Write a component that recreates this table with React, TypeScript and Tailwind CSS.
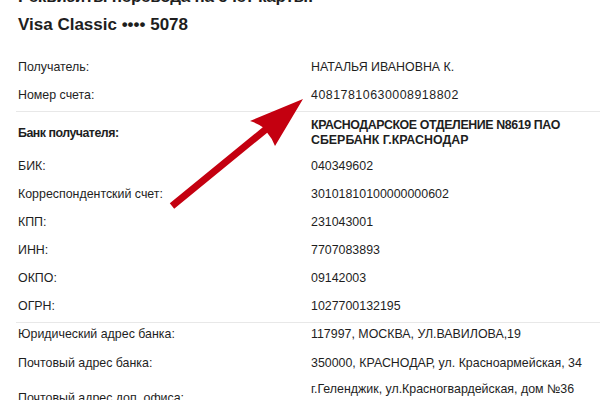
const ROWS_MID = [
  { label: "БИК:", value: "040349602" },
  { label: "Корреспондентский счет:", value: "30101810100000000602" },
  { label: "КПП:", value: "231043001" },
  { label: "ИНН:", value: "7707083893" },
  { label: "ОКПО:", value: "09142003" },
  { label: "ОГРН:", value: "1027700132195" },
];

function Row({
  label,
  value,
  className = "leading-[28px]",
  valueClass = "",
}: {
  label: string;
  value: string;
  className?: string;
  valueClass?: string;
}) {
  return (
    <div className={`flex ${className}`}>
      <div className="w-[293px] shrink-0">{label}</div>
      <div className={`flex-1 ${valueClass}`}>{value}</div>
    </div>
  );
}

function Divider() {
  return <div className="mt-[2px] h-px bg-[#e8e8e8] ml-[-2px]" />;
}

function Arrow() {
  return (
    <svg className="absolute left-0 top-0 pointer-events-none" width="600" height="400" viewBox="0 0 600 400">
      <path
        d="M303 99 L250 121 Q258 123.5 262.8 127.3 L169.8 203.3 L174.2 208.7 L267.2 132.7 Q272 138 275 146 Z"
        fill="#c40010"
      />
    </svg>
  );
}

export default function App() {
  return (
    <div className="relative w-[600px] h-[400px] overflow-hidden bg-white text-[#1e1e1e] font-['Liberation_Sans',Arial,sans-serif]">
      <div className="px-[18px] mt-[-17px] text-[17px] font-bold leading-[28px]">
        <div className="tracking-[-0.25px]">Реквизиты перевода на счет карты:</div>
        <div>Visa Classic •••• 5078</div>
      </div>

      <div className="mt-[14px] pl-[18px] text-[12.4px]">
        <Row label="Получатель:" value="НАТАЛЬЯ ИВАНОВНА К." />
        <Row label="Номер счета:" value="40817810630008918802" valueClass="tracking-[0.5px]" />
        <Divider />

        <div className="flex items-center pt-[6px] pb-[4px] leading-[15px] font-bold">
          <div className="w-[293px] shrink-0 tracking-[-0.5px]">Банк получателя:</div>
          <div className="flex-1">
            <div className="tracking-[-0.4px]">КРАСНОДАРСКОЕ ОТДЕЛЕНИЕ N8619 ПАО</div>
            <div>СБЕРБАНК Г.КРАСНОДАР</div>
          </div>
        </div>

        {ROWS_MID.map((r) => (
          <Row key={r.label} {...r} />
        ))}
        <Divider />

        <Row label="Юридический адрес банка:" value="117997, МОСКВА, УЛ.ВАВИЛОВА,19" className="leading-[22px] pb-[4px]" />
        <Row label="Почтовый адрес банка:" value="350000, КРАСНОДАР, ул. Красноармейская, 34" />

        <div className="flex items-start pt-[3px] leading-[18px]">
          <div className="w-[293px] shrink-0 mt-[9px]">Почтовый адрес доп. офиса:</div>
          <div className="flex-1">г.Геленджик, ул.Красногвардейская, дом №36</div>
        </div>
      </div>

      <Arrow />
    </div>
  );
}
